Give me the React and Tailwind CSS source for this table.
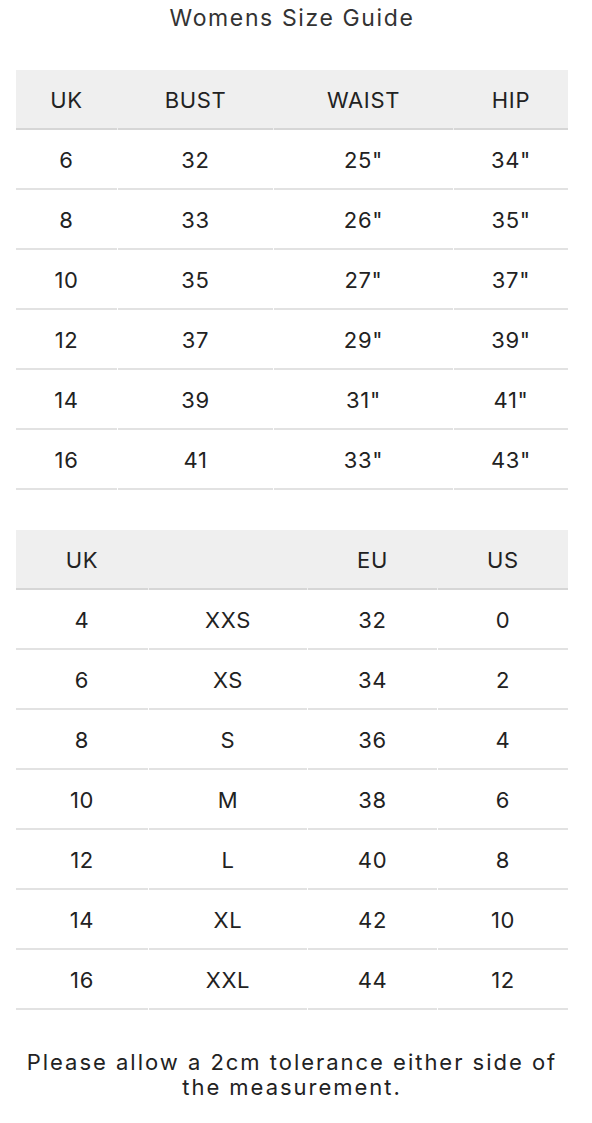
const sizes = [
  ['6', '32', '25"', '34"'],
  ['8', '33', '26"', '35"'],
  ['10', '35', '27"', '37"'],
  ['12', '37', '29"', '39"'],
  ['14', '39', '31"', '41"'],
  ['16', '41', '33"', '43"'],
]

const conversions = [
  ['4', 'XXS', '32', '0'],
  ['6', 'XS', '34', '2'],
  ['8', 'S', '36', '4'],
  ['10', 'M', '38', '6'],
  ['12', 'L', '40', '8'],
  ['14', 'XL', '42', '10'],
  ['16', 'XXL', '44', '12'],
]

function SizeTable({ head, rows, cols }) {
  return (
    <div className="flex flex-col">
      <div className={`grid ${cols} gap-x-px bg-[#efefef]`}>
        {head.map((h, i) => (
          <div
            key={i}
            className="flex h-[60px] items-center justify-center border-b-2 border-[#d6d6d6] pt-0.5"
          >
            {h}
          </div>
        ))}
      </div>
      {rows.map((row, r) => (
        <div key={r} className={`grid ${cols} gap-x-px`}>
          {row.map((cell, i) => (
            <div
              key={i}
              className="flex h-[60px] items-center justify-center border-b-2 border-[#e2e2e2] pt-0.5"
            >
              {cell}
            </div>
          ))}
        </div>
      ))}
    </div>
  )
}

export default function App() {
  return (
    <div className="min-h-[1123px] bg-white pl-4 font-['Inter',sans-serif] text-[22px] tracking-[0.03em] text-[#222]">
      <div className="flex w-[552px] flex-col">
        <h1 className="flex h-[37px] items-center justify-center text-[23px] font-normal tracking-[0.07em] text-[#333]">
          Womens Size Guide
        </h1>
        <div className="mt-[33px]">
          <SizeTable
            head={['UK', 'BUST', 'WAIST', 'HIP']}
            rows={sizes}
            cols="grid-cols-[101px_155px_179px_114px]"
          />
        </div>
        <div className="mt-10">
          <SizeTable
            head={['UK', '', 'EU', 'US']}
            rows={conversions}
            cols="grid-cols-[132px_158px_129px_130px]"
          />
        </div>
        <p className="mt-10 text-center leading-[25px] tracking-[0.09em] text-[#222]">
          Please allow a 2cm tolerance either side of the measurement.
        </p>
      </div>
    </div>
  )
}
